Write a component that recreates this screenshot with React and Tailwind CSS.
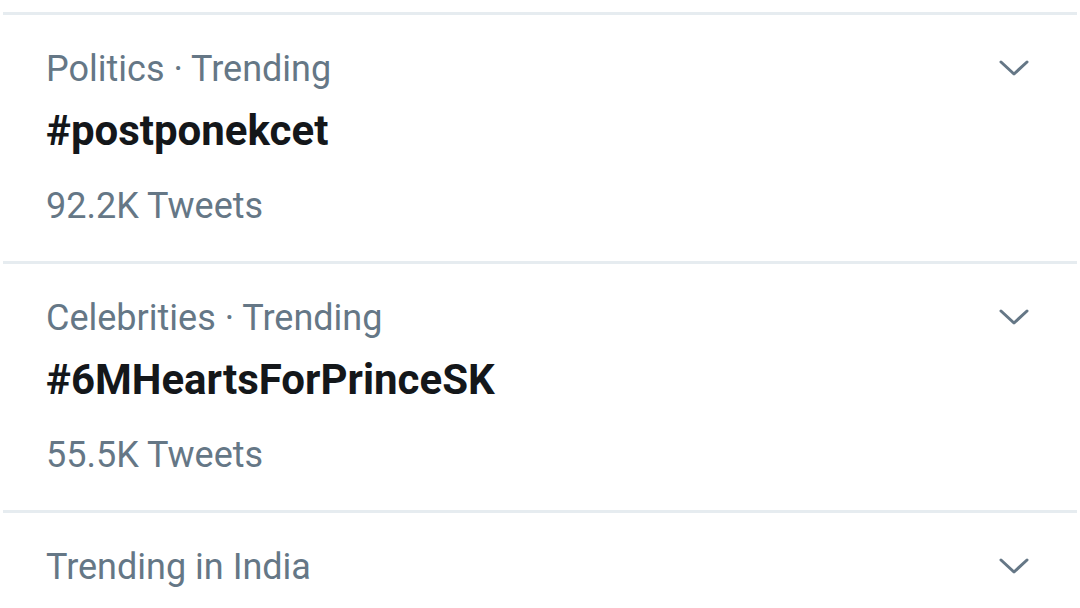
import React from 'react';

const trends = [
  { category: 'Politics · Trending', tag: '#postponekcet', count: '92.2K Tweets' },
  { category: 'Celebrities · Trending', tag: '#6MHeartsForPrinceSK', count: '55.5K Tweets' },
  { category: 'Trending in India' },
];

function Chevron() {
  return (
    <svg width="32" height="18" viewBox="0 0 32 18" fill="none" className="shrink-0">
      <polyline points="3,3 16,15 29,3" stroke="#657786" strokeWidth="3" strokeLinecap="round" strokeLinejoin="round" />
    </svg>
  );
}

function TrendRow({ category, tag, count }) {
  return (
    <div>
      <div className="mx-[3px] h-[3px] bg-[#e6ecf0]" />
      <div className="flex items-start justify-between pl-[46px] pr-[50px] pt-[32px] pb-[33px]">
        <div className="flex flex-col">
          <div className="text-[36px] leading-[44px] text-[#657786]">{category}</div>
          {tag && <div className="mt-[18px] text-[42px] leading-[44px] font-bold text-[#14171a]">{tag}</div>}
          {count && <div className="mt-[31px] text-[36px] leading-[44px] text-[#657786]">{count}</div>}
        </div>
        <div className="pt-[12px]">
          <Chevron />
        </div>
      </div>
    </div>
  );
}

export default function App() {
  return (
    <div className="w-[1080px] h-[608px] overflow-hidden bg-white pt-[12px] font-['Roboto',sans-serif]">
      {trends.map((t, i) => (
        <TrendRow key={i} {...t} />
      ))}
    </div>
  );
}
